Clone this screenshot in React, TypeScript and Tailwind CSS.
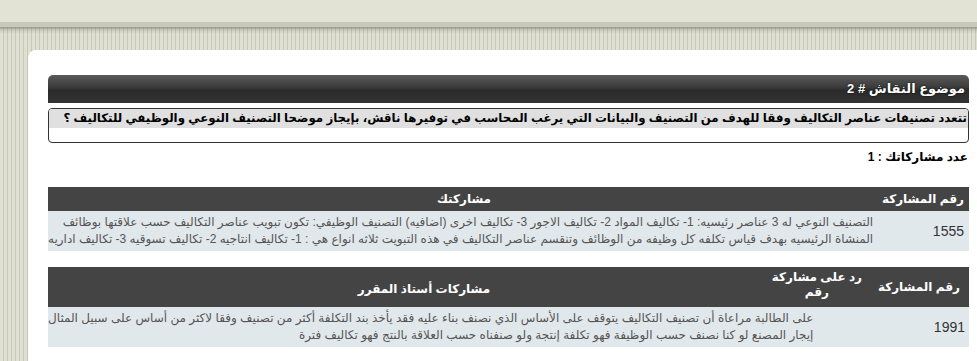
import React from "react";

const font = { fontFamily: '"Liberation Sans", Arial, "DejaVu Sans", sans-serif' };

export default function App() {
  return (
    <div className="w-[977px] h-[361px] overflow-hidden bg-[#e3e3d5] flex flex-col" style={font}>
      <div className="h-[22px] bg-[#e3e3d5] shrink-0" />
      <div className="h-[5px] bg-[#c9c9bb] shrink-0" />
      <div className="flex-1 flex flex-col pt-[23px] pl-[28px] bg-[linear-gradient(180deg,rgba(120,120,112,0.7)_0px,rgba(160,160,150,0.35)_3px,rgba(200,200,190,0)_7px),repeating-linear-gradient(90deg,#e0e0d2_0px,#e0e0d2_3px,#c8c8b8_3px,#c8c8b8_4px)]">
        <div dir="rtl" className="flex-1 bg-white rounded-tl-[8px] pt-[25px] pr-[8px] pl-[20px] flex flex-col">
          {/* Title bar */}
          <div className="h-[28px] rounded-t-[5px] bg-[linear-gradient(180deg,#5a5a5a_0%,#3a3a3a_45%,#2a2a2a_55%,#333333_100%)] flex items-center pr-[4px] shrink-0">
            <span className="text-white font-bold text-[13px] [text-shadow:0_0_2px_#000]">موضوع النقاش # 2</span>
          </div>
          {/* Question */}
          <div className="mt-[5px] h-[35px] border border-[#333] rounded-[4px] overflow-hidden shrink-0">
            <div className="h-[19px] bg-[#e0e0e0] pr-[1px] text-[11.8px] font-bold text-black whitespace-nowrap leading-[19px] overflow-hidden">
              تتعدد تصنيفات عناصر التكاليف وفقا للهدف من التصنيف والبيانات التي يرغب المحاسب في توفيرها ناقش، بإيجاز موضحا التصنيف النوعي والوظيفي للتكاليف ؟
            </div>
          </div>
          {/* Count */}
          <div className="mt-[6px] h-[16px] text-[12px] font-bold text-black leading-[16px] pr-[1px] shrink-0">
            عدد مشاركاتك : 1
          </div>
          {/* Table 1 */}
          <div className="mt-[22px] shrink-0">
            <div className="h-[24px] bg-[#444444] flex text-white font-bold text-[12px] items-center">
              <div className="w-[89px] pr-[5px]">رقم المشاركة</div>
              <div className="flex-1 text-center">مشاركتك</div>
            </div>
            <div className="h-[40px] bg-[#e1e8eb] flex items-center">
              <div className="w-[89px] pr-[5px] text-[14px] text-[#333]">1555</div>
              <div className="flex-1 pr-[31px] text-[12px] leading-[17px] text-[#555] whitespace-nowrap">
                <div>التصنيف النوعي له 3 عناصر رئيسيه: 1- تكاليف المواد 2- تكاليف الاجور 3- تكاليف اخرى (اضافيه) التصنيف الوظيفي: تكون تبويب عناصر التكاليف حسب علاقتها بوظائف</div>
                <div>المنشاة الرئيسيه بهدف قياس تكلفه كل وظيفه من الوظائف وتنقسم عناصر التكاليف في هذه التبويت ثلاثه انواع هي : 1- تكاليف انتاجيه 2- تكاليف تسوقيه 3- تكاليف اداريه</div>
              </div>
            </div>
          </div>
          {/* Table 2 */}
          <div className="mt-[16px] shrink-0">
            <div className="h-[40px] bg-[#444444] flex text-white font-bold text-[12px] items-center">
              <div className="w-[107px] pr-[9px]">رقم المشاركة</div>
              <div className="w-[62px] leading-[15px] whitespace-nowrap flex justify-start -mt-[4px]">
                <span className="text-center">رد على مشاركة<br />رقم</span>
              </div>
              <div className="flex-1 text-center pt-[3px]">مشاركات أستاذ المقرر</div>
            </div>
            <div className="h-[40px] bg-[#e1e8eb] flex items-center">
              <div className="w-[107px] pr-[4px] text-[14px] text-[#333]">1991</div>
              <div className="flex-1 pr-[62px] text-[12px] leading-[17px] text-[#555] whitespace-nowrap">
                <div>على الطالبة مراعاة أن تصنيف التكاليف يتوقف على الأساس الذي نصنف بناء عليه فقد يأخذ بند التكلفة أكثر من تصنيف وفقا لاكثر من أساس على سبيل المثال</div>
                <div>إيجار المصنع لو كنا نصنف حسب الوظيفة فهو تكلفة إنتجة ولو صنفناه حسب العلاقة بالنتج فهو تكاليف فترة</div>
              </div>
            </div>
          </div>
          {/* Table 3 header (cut off) */}
          <div className="mt-[16px] h-[24px] bg-[#444444] shrink-0" />
        </div>
      </div>
    </div>
  );
}
